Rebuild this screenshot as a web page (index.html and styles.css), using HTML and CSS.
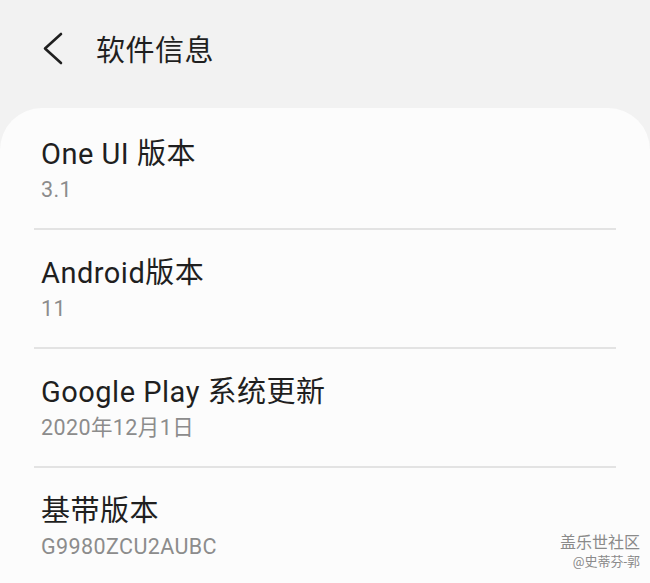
FILE: index.html
```html
<!DOCTYPE html>
<html lang="zh-CN">
  <head>
    <meta charset="UTF-8" />
    <meta name="viewport" content="width=device-width, initial-scale=1.0" />
    <title>软件信息</title>
    <link rel="stylesheet" href="styles.css">
  </head>
  <body>
    <header class="top-bar">
      <a class="back-button" aria-label="返回">
        <svg width="24" height="36" viewBox="0 0 24 36">
          <path d="M20 4 L4 18.5 L20 33" fill="none" stroke="#1f1f1f" stroke-width="2.6" stroke-linecap="round" stroke-linejoin="round" />
        </svg>
      </a>
      <h1>软件信息</h1>
    </header>

    <main class="info-card">
      <div class="info-row">
        <div class="info-title">One UI 版本</div>
        <div class="info-value">3.1</div>
      </div>
      <div class="info-row">
        <div class="info-title">Android版本</div>
        <div class="info-value">11</div>
      </div>
      <div class="info-row">
        <div class="info-title">Google Play 系统更新</div>
        <div class="info-value">2020年12月1日</div>
      </div>
      <div class="info-row">
        <div class="info-title">基带版本</div>
        <div class="info-value">G9980ZCU2AUBC</div>
      </div>
    </main>

    <div class="watermark">
      <div class="watermark-name">盖乐世社区</div>
      <div class="watermark-user">@史蒂芬-郭</div>
    </div>
  </body>
</html>
```

FILE: styles.css
```css
:root {
  --background-color: #f2f2f2;
  --surface-color: #fcfcfc;
  --text-color: #1f1f1f;
  --muted-color: #8c8c8c;
  --divider-color: #e3e3e3;
}
body {
  font-family: "Roboto", "Noto Sans CJK SC", sans-serif;
  background-color: var(--background-color);
  color: var(--text-color);
  margin: 0;
  height: 583px;
  overflow: hidden;
  position: relative;
}
.top-bar {
  display: flex;
  align-items: center;
  height: 96px;
  padding-left: 41px;
}
.back-button {
  display: flex;
  width: 24px;
  height: 36px;
  margin-right: 31px;
  cursor: pointer;
}
h1 {
  margin: 0;
  font-size: 29px;
  font-weight: 400;
  letter-spacing: 0.5px;
}
.info-card {
  background-color: var(--surface-color);
  margin-top: 12px;
  border-radius: 42px 42px 0 0;
  padding: 3px 34px 0 34px;
}
.info-row {
  padding: 25px 0 22px 7px;
  border-bottom: 2px solid var(--divider-color);
}
.info-title {
  font-size: 29px;
  line-height: 37px;
  letter-spacing: 0.5px;
}
.info-value {
  font-size: 21.5px;
  line-height: 33px;
  letter-spacing: 0.4px;
  color: var(--muted-color);
}
.watermark {
  position: absolute;
  right: 10px;
  bottom: 12px;
  text-align: right;
  color: #8a8a8a;
  text-shadow: 0 0 2px #fff;
}
.watermark-name {
  font-size: 16px;
  line-height: 20px;
}
.watermark-user {
  font-size: 13px;
  line-height: 18px;
}
```
